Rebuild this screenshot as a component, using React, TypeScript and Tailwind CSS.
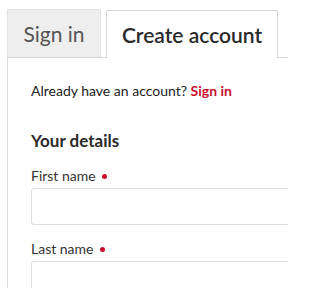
export default function App() {
  return (
    <div className="w-[288px] h-[288px] overflow-hidden bg-white" style={{ fontFamily: 'Lato, "Open Sans", sans-serif' }}>
      <div className="ml-[7px] pt-[9px] w-[340px]">
        <div className="flex items-end border-b border-[#d6d6d6]">
          <div className="w-[94px] h-[48px] bg-[#eeeeee] border border-b-0 border-[#e2e2e2] flex items-center justify-center text-[21px] text-[#555555]">
            Sign in
          </div>
          <div className="relative ml-[5px] w-[172px] h-[48px] -mb-px bg-white border border-b-0 border-[#d6d6d6] rounded-t-[2px] flex items-center justify-center text-[21px] font-semibold text-[#2a2a2a]">
            Create account
          </div>
        </div>
        <div className="border-l border-[#dcdcdc] pl-[23px] pt-[23px] h-[240px]">
          <p className="text-[14px] leading-[20px] text-[#222]">
            Already have an account? <span className="font-bold text-[#c8102e]">Sign in</span>
          </p>
          <h2 className="mt-[28px] text-[17px] leading-[24px] font-bold text-[#2a2a2a]">Your details</h2>
          <div className="mt-[13px]">
            <div className="flex items-center text-[14px] leading-[20px] text-[#333]">
              First name <span className="ml-[6px] w-[5px] h-[5px] rounded-full bg-[#c8102e]" />
            </div>
            <div className="mt-[2px] h-[37px] border border-[#dddddd] rounded-[3px]" />
          </div>
          <div className="mt-[14px]">
            <div className="flex items-center text-[14px] leading-[20px] text-[#333]">
              Last name <span className="ml-[6px] w-[5px] h-[5px] rounded-full bg-[#c8102e]" />
            </div>
            <div className="mt-[2px] h-[37px] border border-[#dddddd] rounded-[3px]" />
          </div>
        </div>
      </div>
    </div>
  );
}
